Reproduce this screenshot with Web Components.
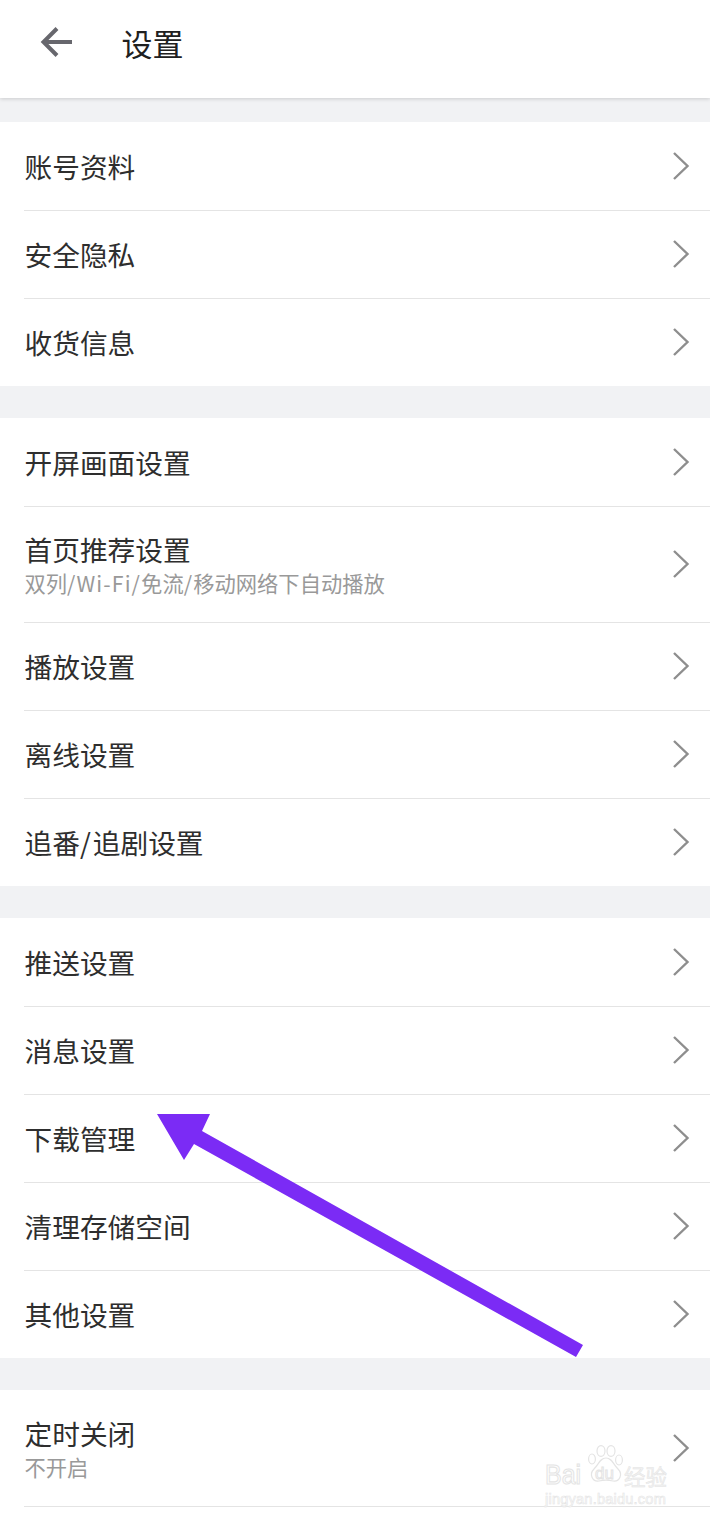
<!DOCTYPE html>
<html lang="zh-CN">
<head>
<meta charset="utf-8">
<title>设置</title>
<style>
html, body { margin: 0; padding: 0; background: #fff; }
body { font-family: "Noto Sans CJK SC", "Noto Sans", sans-serif; }
.latin { letter-spacing: 1.1px; }
.slash { letter-spacing: 2px; }
</style>
</head>
<body>
<settings-screen>
  <page-header>设置</page-header>
  <settings-group first>
    <settings-row>账号资料</settings-row>
    <settings-row>安全隐私</settings-row>
    <settings-row>收货信息</settings-row>
  </settings-group>
  <settings-group>
    <settings-row>开屏画面设置</settings-row>
    <settings-row>首页推荐设置<span slot="sub">双列<span class="latin">/Wi-Fi/</span>免流<span class="latin">/</span>移动网络下自动播放</span></settings-row>
    <settings-row>播放设置</settings-row>
    <settings-row>离线设置</settings-row>
    <settings-row>追番<span class="slash">/</span>追剧设置</settings-row>
  </settings-group>
  <settings-group>
    <settings-row>推送设置</settings-row>
    <settings-row>消息设置</settings-row>
    <settings-row>下载管理</settings-row>
    <settings-row>清理存储空间</settings-row>
    <settings-row>其他设置</settings-row>
  </settings-group>
  <settings-group>
    <settings-row end>定时关闭<span slot="sub">不开启</span></settings-row>
  </settings-group>
  <note-arrow></note-arrow>
  <baidu-mark></baidu-mark>
</settings-screen>

<script>
class SettingsScreen extends HTMLElement{
    constructor(){
        super();
        this.attachShadow({mode: "open"}).innerHTML = `
        <style>
        :host{
            display: block;
            position: relative;
            width: 710px;
            height: 1522px;
            overflow: hidden;
            background: #fff;
        }
        </style>
        <slot></slot>`;
    }
}

class PageHeader extends HTMLElement{
    constructor(){
        super();
        this.attachShadow({mode: "open"}).innerHTML = `
        <style>
        :host{
            display: flex;
            align-items: center;
            height: 98px;
            padding: 0 0 14px 38px;
            box-sizing: border-box;
            background: #fff;
            color: #202020;
            font-size: 31px;
            position: relative;
            box-shadow: 0 1px 4px rgba(0,0,0,.16);
        }
        svg{ width: 38px; height: 38px; margin-right: 45.5px; flex: none; }
        </style>
        <svg viewBox="0 0 38 38" fill="none" stroke="#67676d" stroke-width="4">
            <path d="M19 5.5 L5.5 19 L19 32.5"/>
            <path d="M5.5 19 H34"/>
        </svg>
        <slot></slot>`;
    }
}

class SettingsGroup extends HTMLElement{
    constructor(){
        super();
        this.attachShadow({mode: "open"}).innerHTML = `
        <style>
        :host{
            display: block;
            background: #fff;
            border-top: 32px solid #f1f2f4;
        }
        :host([first]){ border-top-width: 24px; }
        </style>
        <slot></slot>`;
    }
}

class SettingsRow extends HTMLElement{
    constructor(){
        super();
        this.attachShadow({mode: "open"}).innerHTML = `
        <style>
        :host{
            display: flex;
            align-items: center;
            min-height: 88px;
            margin-left: 24px;
            padding-right: 20px;
            box-sizing: border-box;
            box-shadow: inset 0 1px 0 #e4e4e4;
            color: #2e2e2e;
            font-size: 27.7px;
        }
        :host(:first-child){ box-shadow: none; }
        :host([end]){ box-shadow: 0 1px 0 #e4e4e4; }
        :host(.two){ min-height: 116px; }
        .text{ flex: 1; min-width: 0; line-height: 36px; padding-left: .5px; }
        .sub{ display: block; color: #999; font-size: 21.3px; line-height: 31px; }
        svg{ width: 18px; height: 30px; flex: none; }
        </style>
        <div class="text">
            <slot></slot>
            <div class="sub"><slot name="sub"></slot></div>
        </div>
        <svg viewBox="0 0 18 30" fill="none" stroke="#8e8e8e" stroke-width="2.4">
            <path d="M2 2 L15.5 15 L2 28"/>
        </svg>`;
    }

    connectedCallback(){
        if(this.querySelector('[slot="sub"]')){
            this.classList.add('two');
        } else {
            this.shadowRoot.querySelector('.sub').style.display = 'none';
        }
    }
}

class NoteArrow extends HTMLElement{
    constructor(){
        super();
        this.attachShadow({mode: "open"}).innerHTML = `
        <style>
        :host{ position: absolute; left: 0; top: 0; pointer-events: none; }
        svg{ display: block; }
        </style>
        <svg width="710" height="1522" viewBox="0 0 710 1522">
            <polygon fill="#7b2bf5" points="157,1114 210,1114 202,1131 583,1345 576,1357 194,1144 184,1160"/>
        </svg>`;
    }
}

class BaiduMark extends HTMLElement{
    constructor(){
        super();
        this.attachShadow({mode: "open"}).innerHTML = `
        <style>
        :host{
            position: absolute;
            left: 543px;
            top: 1444px;
            width: 130px;
            height: 62px;
            color: #fff;
            font-family: "Liberation Sans", sans-serif;
            pointer-events: none;
        }
        span{
            position: absolute;
            white-space: nowrap;
            -webkit-text-stroke: 1px #e4e4e4;
        }
        .bai{ left: 2px; top: 14px; font-size: 25px; line-height: 32px; transform: scaleY(1.1); }
        .du{ left: 52px; top: 19px; font-size: 17px; line-height: 22px; }
        .jy{ left: 81px; top: 19px; font-size: 21.5px; line-height: 26px; font-family: "Noto Sans CJK SC", sans-serif; color: #f2f2f2; -webkit-text-stroke-width: .5px; }
        .url{ left: 2px; top: 47px; font-size: 14.6px; line-height: 16px; -webkit-text-stroke-width: .6px; letter-spacing: .2px; }
        svg{ position: absolute; left: 44px; top: 1px; }
        </style>
        <svg width="38" height="38" viewBox="0 0 38 38" fill="#fff" stroke="#e4e4e4" stroke-width="1.2">
            <ellipse cx="5" cy="14" rx="3.4" ry="5"/>
            <ellipse cx="14" cy="6" rx="4" ry="5.4"/>
            <ellipse cx="24" cy="6" rx="4" ry="5.4"/>
            <ellipse cx="32" cy="15" rx="3.4" ry="5"/>
            <path d="M19 13 C13 13 12 19 7 24 C2 29 5 37 12 36 C16 35 22 35 26 36 C33 37 36 29 31 24 C26 19 25 13 19 13 Z"/>
        </svg>
        <span class="bai">Bai</span>
        <span class="du">du</span>
        <span class="jy">经验</span>
        <span class="url">jingyan.baidu.com</span>`;
    }
}

customElements.define("settings-screen", SettingsScreen);
customElements.define("page-header", PageHeader);
customElements.define("settings-group", SettingsGroup);
customElements.define("settings-row", SettingsRow);
customElements.define("note-arrow", NoteArrow);
customElements.define("baidu-mark", BaiduMark);
</script>
</body>
</html>
